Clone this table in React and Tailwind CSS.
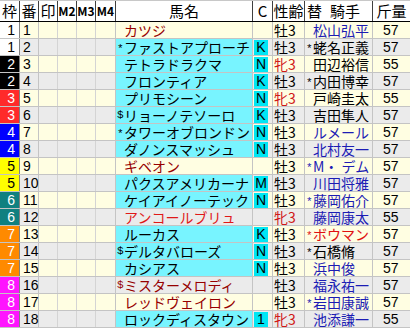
import React from 'react'

const WAKU = {
  1: 'bg-white text-black',
  2: 'bg-black text-white',
  3: 'bg-[#ff2a2a] text-white',
  4: 'bg-[#0000ff] text-white',
  5: 'bg-[#ffff00] text-black',
  6: 'bg-[#108080] text-white',
  7: 'bg-[#ff8a00] text-white',
  8: 'bg-[#ff14ff] text-white',
}

const JC = {
  b: 'text-[#1c1cb4]',
  k: 'text-black',
  r: 'text-[#e01010]',
}

const digits = { fontFamily: '"Liberation Sans", sans-serif' }

// waku, num, prefix, name, cyan?, C mark, sex, jockey star, jockey, jockey colour, weight
const horses = [
  [1, 1, '', 'カツジ', false, '', '牡3', '', '松山弘平', 'b', 57],
  [1, 2, '*', 'ファストアプローチ', true, 'K', '牡3', '*', '蛯名正義', 'k', 57],
  [2, 3, '', 'テトラドラクマ', true, 'N', '牝3', '', '田辺裕信', 'k', 55],
  [2, 4, '', 'フロンティア', true, 'K', '牡3', '*', '内田博幸', 'k', 57],
  [3, 5, '', 'プリモシーン', true, 'N', '牝3', '', '戸崎圭太', 'k', 55],
  [3, 6, '$', 'リョーノテソーロ', true, 'K', '牡3', '', '吉田隼人', 'k', 57],
  [4, 7, '*', 'タワーオブロンドン', true, 'N', '牡3', '', 'ルメール', 'b', 57],
  [4, 8, '', 'ダノンスマッシュ', true, 'N', '牡3', '', '北村友一', 'b', 57],
  [5, 9, '', 'ギベオン', false, '', '牡3', '*', 'M・ デム', 'b', 57],
  [5, 10, '', 'パクスアメリカーナ', true, 'M', '牡3', '', '川田将雅', 'b', 57],
  [6, 11, '', 'ケイアイノーテック', true, 'N', '牡3', '*', '藤岡佑介', 'b', 57],
  [6, 12, '', 'アンコールブリュ', false, '', '牝3', '', '藤岡康太', 'b', 55],
  [7, 13, '', 'ルーカス', true, 'K', '牡3', '*', 'ボウマン', 'r', 57],
  [7, 14, '$', 'デルタバローズ', true, 'N', '牡3', '*', '石橋脩', 'k', 57],
  [7, 15, '', 'カシアス', true, 'N', '牡3', '', '浜中俊', 'b', 57],
  [8, 16, '$', 'ミスターメロディ', false, '', '牡3', '', '福永祐一', 'b', 57],
  [8, 17, '', 'レッドヴェイロン', false, '', '牡3', '*', '岩田康誠', 'b', 57],
  [8, 18, '', 'ロックディスタウン', true, '1', '牝3', '', '池添謙一', 'b', 55],
]

function Mark({ ch, w }) {
  // the asterisk sits on the middle line, like the bitmap font in the original
  if (ch === '*') {
    return <span className={`${w} shrink-0 text-[11px] leading-[16px] translate-y-[2px]`} style={{ fontFamily: '"Liberation Mono", monospace' }}>*</span>
  }
  return <span className={`${w} shrink-0 text-[11px] leading-[16px]`} style={{ fontFamily: '"Liberation Mono", monospace' }}>{ch}</span>
}

export default function App() {
  return (
    <div className="w-[410px] h-[329px] overflow-hidden bg-white text-[14px] leading-[16px] text-black" style={{ fontFamily: '"Noto Sans CJK JP", "Liberation Sans", sans-serif' }}>
      {/* Header */}
      <div className="flex h-[22px] border-t border-[#c8c8c8] border-b border-b-black bg-white text-[15px]">
        <div className="w-[20px] flex items-center justify-center border-r border-[#404040]">枠</div>
        <div className="w-[19px] flex items-center justify-center border-r border-[#404040]">番</div>
        <div className="w-[19px] flex items-center justify-center border-r border-[#404040]">印</div>
        <div className="w-[19px] flex items-center justify-center border-r border-[#404040] text-[12px] font-bold">M2</div>
        <div className="w-[19px] flex items-center justify-center border-r border-[#404040] text-[12px] font-bold">M3</div>
        <div className="w-[20px] flex items-center justify-center border-r border-[#404040] text-[12px] font-bold">M4</div>
        <div className="w-[137px] flex items-center justify-center border-r border-[#404040]">馬名</div>
        <div className="w-[20px] flex items-center justify-center border-r border-[#404040]">C</div>
        <div className="w-[32px] flex items-center justify-center border-r border-[#404040]">性齢</div>
        <div className="w-[68px] flex items-center pl-[2px] gap-[8px] border-r border-[#404040]"><span>替</span><span>騎手</span></div>
        <div className="flex-1 flex items-center justify-center">斤量</div>
      </div>

      {/* Rows */}
      {horses.map(([w, n, pre, name, cyan, c, sex, star, jockey, jc, kg], i) => {
        const rowBg = i % 2 === 0 ? 'bg-[#fffee2]' : 'bg-[#ebebeb]'
        const nameColor = n === 12 ? 'text-[#e01818]' : 'text-[#960000]'
        return (
          <div key={n} className={`flex h-[17px] border-b border-[#c4c4c4] ${rowBg}`}>
            <div className={`w-[20px] flex items-center justify-end pr-[4px] border-r border-[#808080] ${WAKU[w]}`} style={digits}>{w}</div>
            <div className="w-[19px] flex items-center pl-[3px] border-r border-[#c4c4c4]" style={digits}>{n}</div>
            <div className="w-[19px] border-r border-[#d4d4d4]" />
            <div className="w-[19px] border-r border-[#d4d4d4]" />
            <div className="w-[19px] border-r border-[#d4d4d4]" />
            <div className="w-[20px] border-r border-[#c4c4c4]" />
            <div className={`w-[137px] flex items-center pl-[1px] border-r border-[#c4c4c4] ${cyan ? 'bg-[#78f4ff] text-black' : nameColor}`}>
              <Mark ch={pre} w="w-[7px]" />
              <span className="whitespace-nowrap">{name}</span>
            </div>
            <div className="w-[20px] flex items-center pl-[1px] border-r border-[#c4c4c4]">
              {c && <span className="w-[14px] h-[15px] flex items-center justify-center bg-[#00e6f4]" style={digits}>{c}</span>}
            </div>
            <div className={`w-[32px] flex items-center pl-[1px] border-r border-[#c4c4c4] ${sex === '牝3' ? 'text-[#d01818]' : 'text-black'}`}>{sex}</div>
            <div className={`w-[68px] flex items-center pl-[1px] border-r border-[#c4c4c4] ${JC[jc]}`}>
              <Mark ch={star} w="w-[7px]" />
              <span className="whitespace-pre">{jockey}</span>
            </div>
            <div className="flex-1 flex items-center pl-[10px]" style={digits}>{kg}</div>
          </div>
        )
      })}
    </div>
  )
}
